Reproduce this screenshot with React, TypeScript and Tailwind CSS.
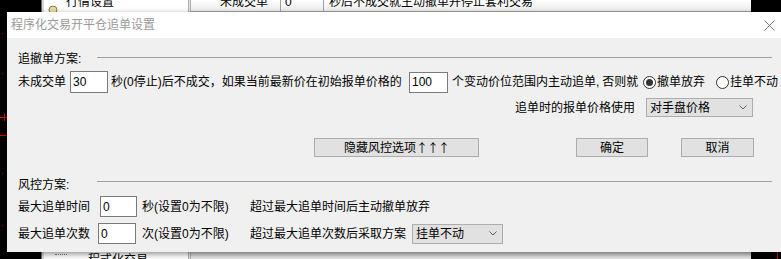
import React from 'react';

const font = "font-['Liberation_Sans','Noto_Sans_CJK_SC',sans-serif]";

const TextBox = ({ value, className }: { value: string; className: string }) => (
  <div className={`shrink-0 bg-white border border-[#7a7a7a] pl-[2px] flex items-center text-[12px] leading-[14px] ${className}`}>
    {value}
  </div>
);

const Chevron = () => (
  <svg width="8" height="5" viewBox="0 0 8 5" className="shrink-0">
    <polyline points="0.5,0.5 4,4 7.5,0.5" fill="none" stroke="#606060" strokeWidth="1" />
  </svg>
);

const ComboBox = ({ value, className }: { value: string; className: string }) => (
  <div className={`shrink-0 bg-[#e1e1e1] border border-[#adadad] flex items-center justify-between pl-[3px] pr-[5px] text-[12px] leading-[14px] ${className}`}>
    <span>{value}</span>
    <Chevron />
  </div>
);

const Button = ({ children, className }: { children: React.ReactNode; className: string }) => (
  <div className={`shrink-0 h-[19px] bg-[#e1e1e1] border border-[#adadad] flex items-center justify-center text-[12px] leading-[14px] ${className}`}>
    {children}
  </div>
);

const Radio = ({ checked, className = '' }: { checked?: boolean; className?: string }) => (
  <div className={`shrink-0 w-[13px] h-[13px] rounded-full border border-[#333333] bg-white flex items-center justify-center ${className}`}>
    {checked && <div className="w-[7px] h-[7px] rounded-full bg-[#333333]" />}
  </div>
);

const SectionHeader = ({ title, className, lineClass }: { title: string; className: string; lineClass: string }) => (
  <div className={`flex h-[14px] items-center ${className}`}>
    <span className="w-[79px] shrink-0 text-[12px] leading-[14px]">{title}</span>
    <div className={`flex-1 h-px bg-[#a0a0a0] ${lineClass}`} />
  </div>
);

export default function App() {
  return (
    <div className={`relative w-[781px] h-[259px] overflow-hidden bg-black flex text-black ${font}`}>
      {/* background application */}
      <div className="relative w-[41px] shrink-0 bg-black">
        <div className="absolute left-[2px] top-[33px] w-px h-px bg-[#c00000]" />
        <div className="absolute left-[2px] top-[73px] w-px h-px bg-[#c00000]" />
        <div className="absolute left-0 top-[117px] w-[8px] h-px bg-[#e00000]" />
        <div className="absolute left-[4px] top-[114px] w-px h-[7px] bg-[#e00000]" />
        <div className="absolute left-0 top-[135px] w-[8px] h-px bg-[#e00000]" />
        <div className="absolute left-[2px] top-[173px] w-px h-px bg-[#c00000]" />
        <div className="absolute left-[2px] top-[225px] w-px h-px bg-[#c00000]" />
      </div>
      <div className="w-[3px] shrink-0 bg-[#d8d8d8] border-l border-[#6a6a6a]" />
      <div className="w-[144px] shrink-0 bg-white flex flex-col justify-between">
        <div className="h-[12px] flex items-start pl-[4px] gap-[8px] overflow-hidden">
          <svg width="10" height="10" viewBox="0 0 10 10" className="mt-[5px] shrink-0">
            <circle cx="5" cy="5" r="4" fill="#e8d9a0" stroke="#8a7a40" strokeWidth="1" />
          </svg>
          <span className="text-[12px] leading-[14px] -translate-y-[5px]">行情设置</span>
        </div>
        <div className="h-[7px] flex items-start pl-[11px] overflow-hidden">
          <span className="w-[12px] mt-[2px] border-t border-dotted border-[#808080]" />
          <span className="ml-[21px] text-[12px] leading-[14px] mt-[1px]">程式化交易</span>
        </div>
      </div>
      <div className="w-[3px] shrink-0 bg-[#e4e4e4] border-x border-[#b0b0b0]" />
      <div className="flex-1 flex flex-col justify-between bg-[#f0f0f0]">
        <div className="h-[12px] flex bg-gradient-to-b from-white to-[#ececec] border-b border-[#a0a0a0] overflow-hidden text-[12px] leading-[14px]">
          <div className="w-[90px] shrink-0 pl-[29px] border-r border-[#a0a0a0]">
            <span className="block -translate-y-[5px]">未成交单</span>
          </div>
          <div className="w-[43px] shrink-0 pl-[4px] border-r border-[#a0a0a0]">
            <span className="block -translate-y-[5px]">0</span>
          </div>
          <div className="flex-1 pl-[5px]">
            <span className="block -translate-y-[5px]">秒后不成交就主动撤单并停止套利交易</span>
          </div>
        </div>
        <div className="h-[7px] bg-gradient-to-b from-[#c8c8c8] to-[#ececec]" />
      </div>
      <div className="w-[30px] shrink-0 bg-black flex justify-end pr-[3px] items-end">
        <div className="w-px h-[18px] bg-[#e00000]" />
      </div>

      {/* dialog window */}
      <div className="absolute left-[7px] top-[12px] w-[776px] flex flex-col shadow-[0_2px_6px_rgba(0,0,0,0.45)]">
        <div className="h-[26px] bg-white flex items-center justify-between pl-[4px] pr-[8px]">
          <span className="text-[12px] leading-[14px] text-[#999999]">程序化交易开平仓追单设置</span>
          <svg width="11" height="11" viewBox="0 0 11 11">
            <path d="M0.5 0.5 L10.5 10.5 M10.5 0.5 L0.5 10.5" stroke="#7a7a7a" strokeWidth="1" fill="none" />
          </svg>
        </div>
        <div className="h-[214px] bg-[#f0f0f0] flex flex-col pl-[11px] pr-[11px] text-[12px] leading-[14px] whitespace-nowrap">
          <SectionHeader title="追撤单方案:" className="mt-[14px]" lineClass="mb-[4px]" />

          <div className="mt-[5px] h-[22px] flex items-center">
            <span className="w-[52px] shrink-0">未成交单</span>
            <TextBox value="30" className="w-[38px] h-[22px]" />
            <span className="ml-[3px] w-[294px] shrink-0">秒(0停止)后不成交，如果当前最新价在初始报单价格的</span>
            <TextBox value="100" className="ml-[4px] w-[39px] h-[21px]" />
            <span className="ml-[4px] w-[186px] shrink-0">
              个变动价位范围内主动追单,<span className="ml-[3px]">否则就</span>
            </span>
            <Radio checked className="ml-[5px]" />
            <span className="ml-[1px] w-[48px] shrink-0">撤单放弃</span>
            <Radio className="ml-[11px]" />
            <span className="ml-[1px] shrink-0">挂单不动</span>
          </div>

          <div className="mt-[5px] h-[19px] flex items-center justify-end">
            <span className="shrink-0">追单时的报单价格使用</span>
            <ComboBox value="对手盘价格" className="ml-[11px] mr-[19px] w-[107px] h-[19px]" />
          </div>

          <div className="mt-[21px] h-[19px] flex items-center">
            <Button className="ml-[296px] w-[165px]">
              隐藏风控选项
              <span className="font-['Noto_Sans_CJK_SC',sans-serif] tracking-[-1px]">↑↑↑</span>
            </Button>
            <Button className="ml-[97px] w-[72px]">确定</Button>
            <Button className="ml-[33px] w-[73px]">取消</Button>
          </div>

          <SectionHeader title="风控方案:" className="mt-[21px]" lineClass="mb-[7px]" />

          <div className="mt-[4px] h-[21px] flex items-center">
            <span className="w-[82px] shrink-0">最大追单时间</span>
            <TextBox value="0" className="w-[37px] h-[21px]" />
            <span className="ml-[5px] w-[108px] shrink-0">秒(设置0为不限)</span>
            <span className="shrink-0">超过最大追单时间后主动撤单放弃</span>
          </div>

          <div className="mt-[6px] h-[21px] flex items-center">
            <span className="w-[80px] shrink-0">最大追单次数</span>
            <TextBox value="0" className="w-[38px] h-[21px]" />
            <span className="ml-[6px] w-[108px] shrink-0">次(设置0为不限)</span>
            <span className="w-[156px] shrink-0">超过最大追单次数后采取方案</span>
            <ComboBox value="挂单不动" className="ml-[6px] w-[91px] h-[20px]" />
          </div>
        </div>
      </div>
    </div>
  );
}
